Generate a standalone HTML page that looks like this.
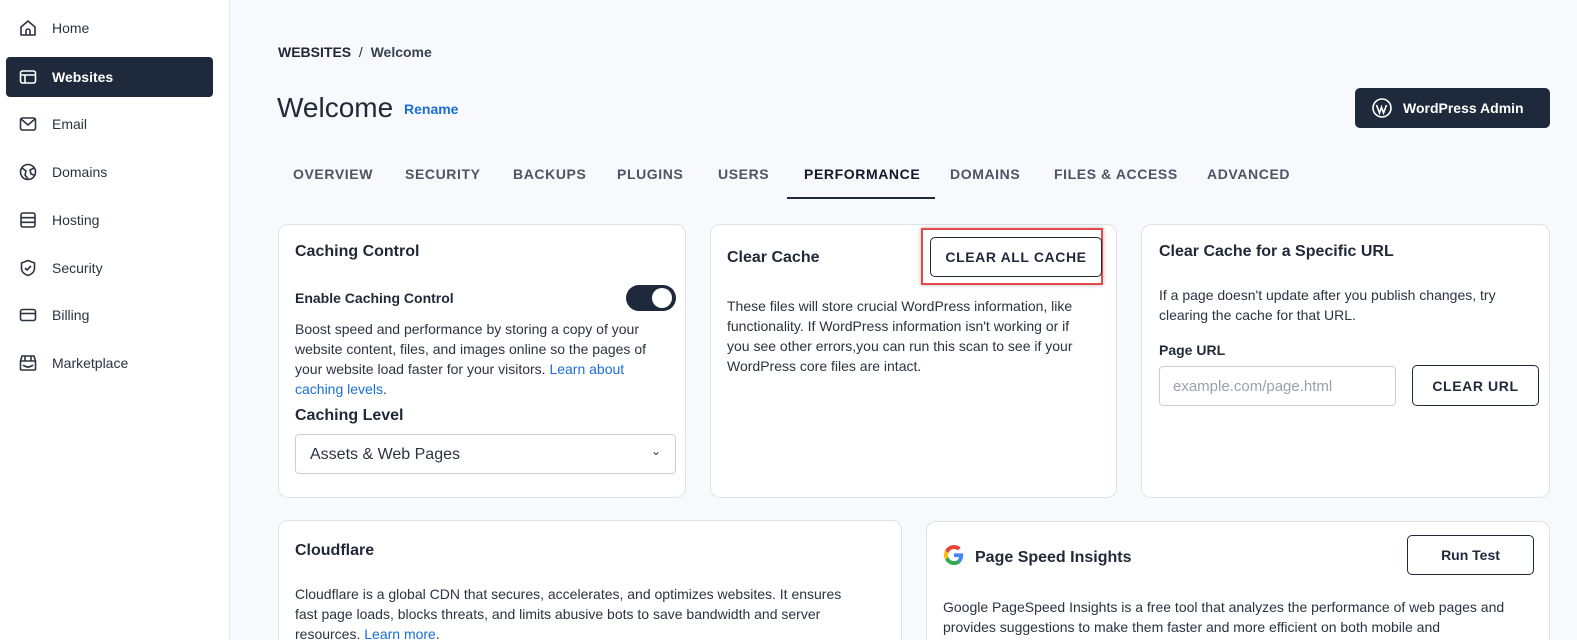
<!DOCTYPE html>
<html><head><meta charset="utf-8"><style>
*{box-sizing:border-box;margin:0;padding:0}
html,body{width:1577px;height:640px;overflow:hidden}
body{background:#f7f9fc;font-family:"Liberation Sans",sans-serif;color:#1f2937;position:relative}
.side{position:absolute;left:0;top:0;width:230px;height:640px;background:#fff;border-right:1px solid #e2e6ec}
.nav{position:absolute;left:6px;width:207px;height:40px;border-radius:4px;display:flex;align-items:center;font-size:14px;color:#2b3340}
.nav svg{position:absolute;left:12px;width:20px;height:20px;fill:none;stroke:#2b3340;stroke-width:1.6}
.nav span{position:absolute;left:46px}
.nav.act{background:#1e293b;color:#fff;font-weight:bold}
.nav.act svg{stroke:#fff}
.abs{position:absolute}
.tab{position:absolute;top:166px;font-size:14px;font-weight:bold;letter-spacing:.6px;color:#4b5563}
.card{position:absolute;background:#fff;border:1px solid #dfe3e9;border-radius:10px;overflow:hidden}
.h{position:absolute;font-size:16px;font-weight:bold;color:#1f2937}
.p{position:absolute;font-size:14px;line-height:20px;color:#2b3340}
.btn{position:absolute;border:1.5px solid #1e293b;border-radius:5px;background:#fff;font-size:14px;font-weight:bold;display:flex;align-items:center;justify-content:center;color:#1e293b;letter-spacing:.6px}
a{color:#1a6ed8;text-decoration:none}
</style></head><body>
<div class="side">
<div class="nav" style="top:8px"><svg viewBox="0 0 20 20"><path d="M3 9l7-6 7 6v8H3z M8 17v-4a2 2 0 014 0v4"/></svg><span>Home</span></div>
<div class="nav act" style="top:57px"><svg viewBox="0 0 20 20"><rect x="2.5" y="4" width="15" height="12" rx="2"/><path d="M2.5 8h15M7 8v8"/></svg><span>Websites</span></div>
<div class="nav" style="top:104px"><svg viewBox="0 0 20 20"><rect x="2.5" y="4" width="15" height="12" rx="2"/><path d="M3 5l7 6 7-6"/></svg><span>Email</span></div>
<div class="nav" style="top:152px"><svg viewBox="0 0 20 20"><circle cx="10" cy="10" r="7.5"/><path d="M4 6l4 3-1 4 3 4M16 6l-4 2 1 4 3 1"/></svg><span>Domains</span></div>
<div class="nav" style="top:200px"><svg viewBox="0 0 20 20"><rect x="3" y="3" width="14" height="14" rx="2"/><path d="M3 7.7h14M3 12.3h14"/></svg><span>Hosting</span></div>
<div class="nav" style="top:248px"><svg viewBox="0 0 20 20"><path d="M10 2.5l6.5 2.5v5c0 4-3 6.5-6.5 7.5C6.5 16.5 3.5 14 3.5 10V5z M7 10l2 2 4-4"/></svg><span>Security</span></div>
<div class="nav" style="top:295px"><svg viewBox="0 0 20 20"><rect x="2.5" y="4.5" width="15" height="11" rx="2"/><path d="M2.5 8.5h15"/></svg><span>Billing</span></div>
<div class="nav" style="top:343px"><svg viewBox="0 0 20 20"><path d="M4 3h12l1.5 5v8a1 1 0 01-1 1h-13a1 1 0 01-1-1V8z M2.5 8h15 M7 3v5M13 3v5 M5 12q5 4 10 0"/></svg><span>Marketplace</span></div>
</div>

<div class="abs" style="left:278px;top:44px;font-size:14px;color:#1f2937"><b>WEBSITES</b> &nbsp;/&nbsp; <span style="color:#374151;font-weight:bold">Welcome</span></div>
<div class="abs" style="left:277px;top:92px;font-size:28px;color:#1f2937">Welcome</div>
<div class="abs" style="left:404px;top:101px;font-size:14px;font-weight:bold;color:#1a6ed8">Rename</div>
<div class="abs" style="left:1355px;top:88px;width:195px;height:40px;background:#1e293b;border-radius:5px;color:#fff;font-weight:bold;font-size:14px;display:flex;align-items:center;padding-left:16px">
<svg width="22" height="22" viewBox="0 0 22 22"><circle cx="11" cy="11" r="9" fill="none" stroke="#fff" stroke-width="1.6"/><path d="M5.5 8l3 8 2-6 2 6 3-8" fill="none" stroke="#fff" stroke-width="1.6"/></svg><span style="margin-left:10px">WordPress Admin</span></div>

<div class="tab" style="left:293px">OVERVIEW</div>
<div class="tab" style="left:405px">SECURITY</div>
<div class="tab" style="left:513px">BACKUPS</div>
<div class="tab" style="left:617px">PLUGINS</div>
<div class="tab" style="left:718px">USERS</div>
<div class="tab" style="left:804px;color:#111827">PERFORMANCE</div>
<div class="abs" style="left:787px;top:197px;width:148px;height:2px;background:#1e293b"></div>
<div class="tab" style="left:950px">DOMAINS</div>
<div class="tab" style="left:1054px">FILES &amp; ACCESS</div>
<div class="tab" style="left:1207px">ADVANCED</div>

<div class="card" style="left:278px;top:224px;width:408px;height:274px">
<div class="h" style="left:16px;top:18px">Caching Control</div>
<div class="abs" style="left:16px;top:65px;font-size:14px;font-weight:bold;color:#1f2937">Enable Caching Control</div>
<div class="abs" style="left:347px;top:60px;width:50px;height:26px;border-radius:13px;background:#1e293b"><div class="abs" style="left:26px;top:3px;width:20px;height:20px;border-radius:50%;background:#fff"></div></div>
<div class="p" style="left:16px;top:94px;width:380px">Boost speed and performance by storing a copy of your website content, files, and images online so the pages of your website load faster for your visitors. <a>Learn about caching levels</a>.</div>
<div class="abs" style="left:16px;top:182px;font-size:16px;font-weight:bold">Caching Level</div>
<div class="abs" style="left:16px;top:209px;width:381px;height:40px;border:1px solid #c9ced6;border-radius:4px;font-size:16px;padding:11px 14px;color:#2b3340">Assets &amp; Web Pages<span style="position:absolute;right:14px;top:9px;font-size:12px">&#8964;</span></div>
</div>

<div class="card" style="left:710px;top:224px;width:407px;height:274px;overflow:visible">
<div class="h" style="left:16px;top:24px">Clear Cache</div>
<div class="abs" style="left:210px;top:3px;width:182px;height:57px;border:2px solid #e44a4a;box-shadow:0 0 4px rgba(0,0,0,.3)"></div>
<div class="btn" style="left:219px;top:12px;width:172px;height:40px">CLEAR ALL CACHE</div>
<div class="p" style="left:16px;top:71px;width:362px">These files will store crucial WordPress information, like functionality. If WordPress information isn't working or if you see other errors,you can run this scan to see if your WordPress core files are intact.</div>
</div>

<div class="card" style="left:1141px;top:224px;width:409px;height:274px">
<div class="h" style="left:17px;top:18px">Clear Cache for a Specific URL</div>
<div class="p" style="left:17px;top:60px;width:385px">If a page doesn't update after you publish changes, try clearing the cache for that URL.</div>
<div class="abs" style="left:17px;top:117px;font-size:14px;font-weight:bold">Page URL</div>
<div class="abs" style="left:17px;top:141px;width:237px;height:40px;border:1px solid #c9ced6;border-radius:4px;font-size:15px;padding:11px 13px;color:#9aa1ab">example.com/page.html</div>
<div class="btn" style="left:270px;top:140px;width:127px;height:41px">CLEAR URL</div>
</div>

<div class="card" style="left:278px;top:520px;width:624px;height:140px">
<div class="h" style="left:16px;top:21px">Cloudflare</div>
<div class="p" style="left:16px;top:63px;width:568px">Cloudflare is a global CDN that secures, accelerates, and optimizes websites. It ensures fast page loads, blocks threats, and limits abusive bots to save bandwidth and server resources. <a>Learn more</a>.</div>
</div>

<div class="card" style="left:926px;top:521px;width:624px;height:140px">
<svg class="abs" style="left:17px;top:23px" width="20" height="20" viewBox="0 0 48 48"><path fill="#EA4335" d="M24 9.5c3.5 0 6.6 1.2 9.1 3.6l6.8-6.8C35.8 2.4 30.3 0 24 0 14.6 0 6.6 5.4 2.7 13.3l7.9 6.2C12.5 13.6 17.8 9.5 24 9.5z"/><path fill="#4285F4" d="M46.1 24.5c0-1.6-.1-3.1-.4-4.5H24v9h12.4c-.5 2.9-2.2 5.3-4.7 7l7.6 5.9c4.4-4.1 6.8-10.1 6.8-17.4z"/><path fill="#FBBC05" d="M10.5 28.6c-.5-1.4-.8-3-.8-4.6s.3-3.2.8-4.6l-7.9-6.2C1 16.5 0 20.1 0 24s1 7.5 2.7 10.7l7.8-6.1z"/><path fill="#34A853" d="M24 48c6.5 0 11.9-2.1 15.9-5.8l-7.6-5.9c-2.1 1.4-4.9 2.3-8.3 2.3-6.2 0-11.5-4.2-13.4-9.9l-7.9 6.1C6.6 42.6 14.6 48 24 48z"/></svg>
<div class="h" style="left:48px;top:27px">Page Speed Insights</div>
<div class="btn" style="left:480px;top:13px;width:127px;height:40px;letter-spacing:0">Run Test</div>
<div class="p" style="left:16px;top:75px;width:600px">Google PageSpeed Insights is a free tool that analyzes the performance of web pages and provides suggestions to make them faster and more efficient on both mobile and</div>
</div>
</body></html>
